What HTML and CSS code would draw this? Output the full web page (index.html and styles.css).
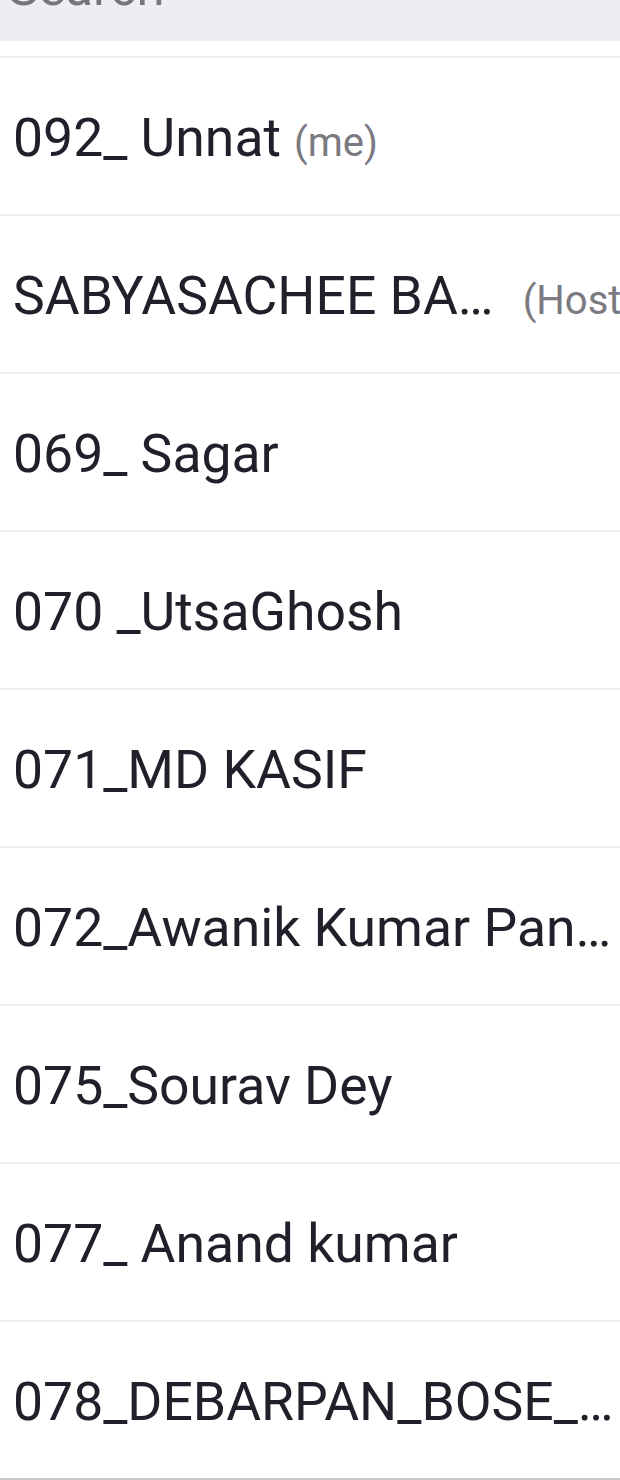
FILE: index.html
```html
<!DOCTYPE html>
<html lang="en">
<head>
<meta charset="utf-8">
<title>Participants</title>
<link rel="stylesheet" href="styles.css">
</head>
<body>
<div class="screen">
  <div class="search">
    <span class="search-placeholder">Search</span>
  </div>
  <ul class="list">
    <li class="row"><span class="name">092_ Unnat</span><span class="tag">(me)</span></li>
    <li class="row"><span class="name">SABYASACHEE BA…</span><span class="tag tag--host">(Host)</span></li>
    <li class="row"><span class="name">069_ Sagar</span></li>
    <li class="row"><span class="name">070 _UtsaGhosh</span></li>
    <li class="row"><span class="name">071_MD KASIF</span></li>
    <li class="row"><span class="name">072_Awanik Kumar Pan…</span></li>
    <li class="row"><span class="name">075_Sourav Dey</span></li>
    <li class="row"><span class="name">077_ Anand kumar</span></li>
    <li class="row"><span class="name">078_DEBARPAN_BOSE_…</span></li>
  </ul>
</div>
</body>
</html>
```

FILE: styles.css
```css
html, body {
  margin: 0;
  padding: 0;
  background: #ffffff;
}

body {
  font-family: Roboto, "Noto Sans", Arial, sans-serif;
  overflow: hidden;
}

.screen {
  width: 620px;
  height: 1480px;
  overflow: hidden;
}

.search {
  height: 108px;
  margin-top: -67px;
  background: #edeef1;
  display: flex;
  align-items: center;
  padding-left: 8px;
}

.search-placeholder {
  font-size: 51px;
  color: #76777d;
  line-height: 1;
}

.list {
  list-style: none;
  margin: 15px 0 0 0;
  padding: 0;
  border-top: 2px solid #efefef;
}

.row {
  height: 152px;
  padding: 4px 0 0 13px;
  border-bottom: 2px solid #efefef;
  display: flex;
  align-items: baseline;
  white-space: nowrap;
  overflow: hidden;
  box-sizing: content-box;
  line-height: 152px;
}

.row:last-child {
  border-bottom-color: #c6c6c6;
}

.name {
  font-size: 53.5px;
  color: #1f2029;
}

.tag {
  font-size: 40px;
  color: #7a7a80;
  margin-left: 13px;
}

.tag--host {
  margin-left: 29px;
}
```
